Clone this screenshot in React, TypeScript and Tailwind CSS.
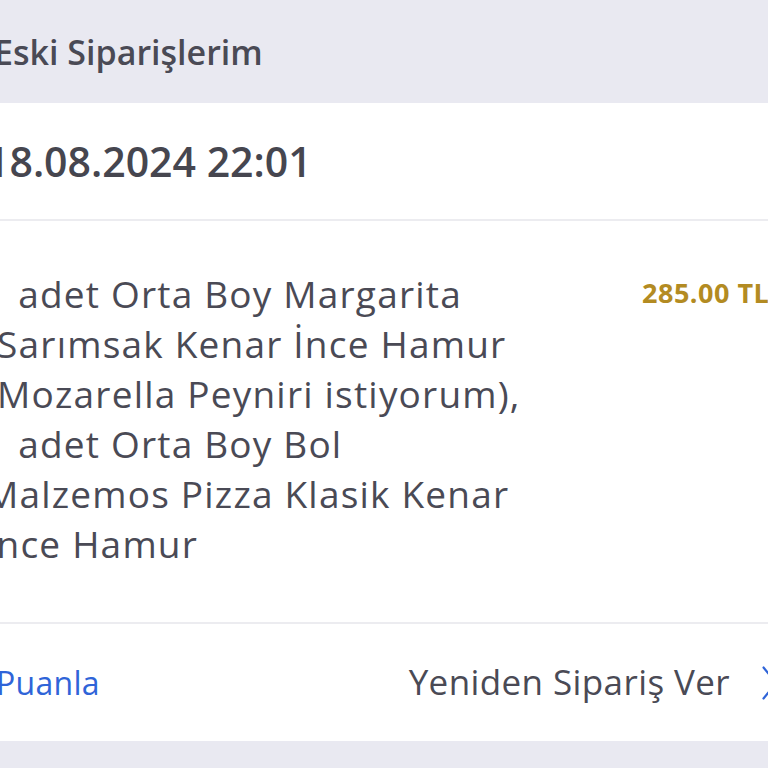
import React from "react";

const lines = [
  "1 adet Orta Boy Margarita",
  "(Sarımsak Kenar İnce Hamur",
  "(Mozarella Peyniri istiyorum),",
  "1 adet Orta Boy Bol",
  "Malzemos Pizza Klasik Kenar",
  "İnce Hamur",
];

export default function App() {
  const font = { fontFamily: "'Open Sans', 'Noto Sans', sans-serif" };
  return (
    <div className="w-[768px] h-[768px] overflow-hidden bg-[#e9e9f1]" style={font}>
      <div className="h-[103px] flex items-center -ml-[6px]">
        <span className="text-[34px] font-semibold text-[#4a4a55] leading-none">Eski Siparişlerim</span>
      </div>
      <div className="bg-white w-[800px] -ml-[14px]">
        <div className="h-[118px] flex items-center border-b-2 border-[#ececf0]">
          <span className="text-[41px] font-semibold text-[#46464f] leading-none">18.08.2024 22:01</span>
        </div>
        <div className="flex pt-[48px] pb-[53px] border-b-2 border-[#ececf0]">
          <div className="text-[37px] leading-[50px] tracking-[1.2px] text-[#4a4a55] -ml-[1px]">
            {lines.map((l) => (
              <div key={l} className="whitespace-nowrap">{l}</div>
            ))}
          </div>
          <div className="ml-auto w-[144px] shrink-0 text-[27px] font-bold tracking-[0.5px] text-[#b38b22] pt-[4px] whitespace-nowrap">285.00 TL</div>
        </div>
        <div className="h-[117px] flex items-center">
          <span className="text-[32px] tracking-[0.3px] text-[#2f64d8] pl-[10px]">Puanla</span>
          <span className="ml-auto text-[35px] tracking-[0.4px] text-[#4a4a55]">Yeniden Sipariş Ver</span>
          <svg className="ml-[32px] mr-[8px] shrink-0" width="16" height="34" viewBox="0 0 16 34" fill="none">
            <path d="M1.5 1.5 L14 17 L1.5 32.5" stroke="#2f64d8" strokeWidth="2.2" strokeLinecap="round" strokeLinejoin="round" />
          </svg>
        </div>
      </div>
    </div>
  );
}
